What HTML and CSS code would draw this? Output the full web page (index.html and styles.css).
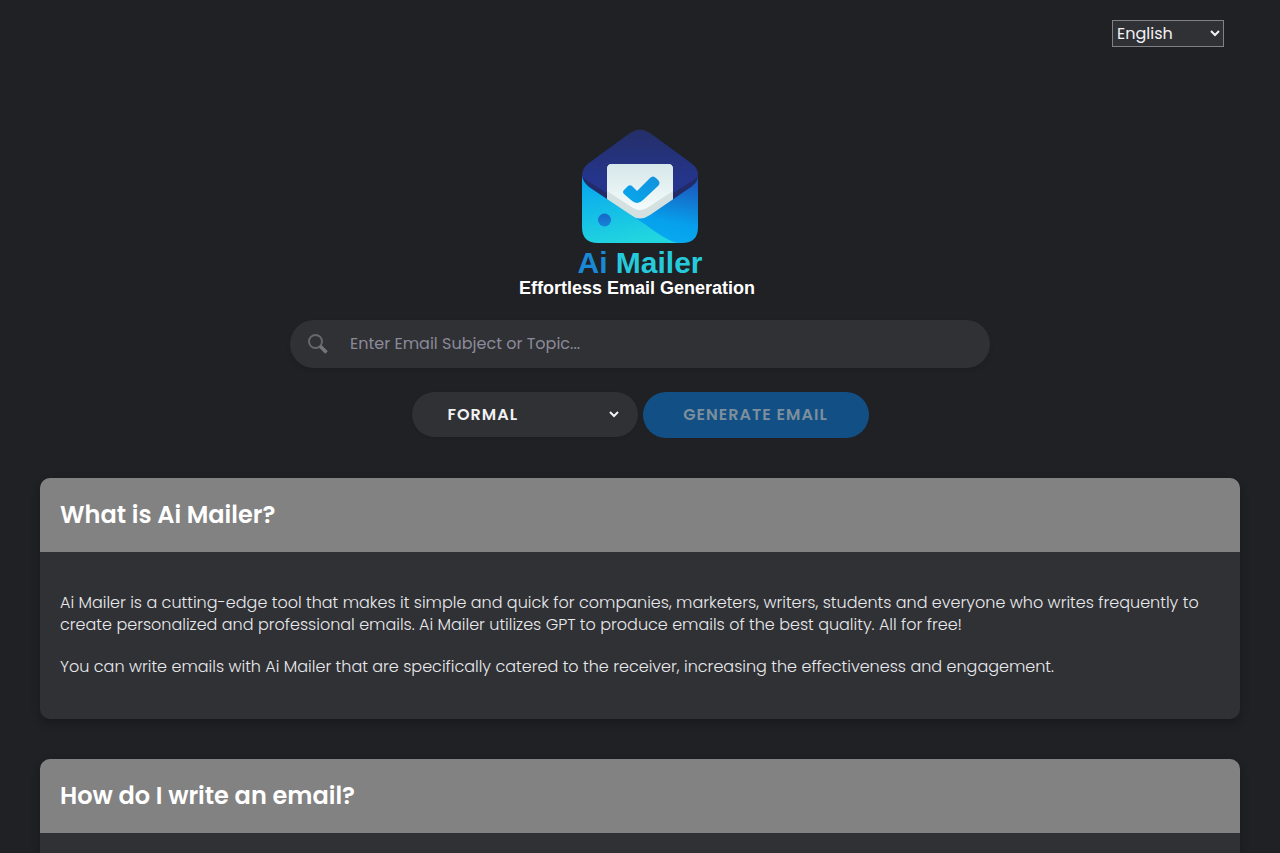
FILE: index.html
```html
<!DOCTYPE html>
<html lang="en">
<head>
<meta charset="utf-8">
<meta name="viewport" content="width=device-width, initial-scale=1">
<title>Ai Mailer</title>
<link rel="stylesheet" href="styles.css">
</head>
<body>
<header class="topbar">
  <select class="language" aria-label="Language">
    <option>English</option>
  </select>
</header>
<main>
  <section class="hero">
    <div class="logo">
      <svg class="logo-mark" viewBox="0 0 116 114" role="img" aria-label="Ai Mailer logo">
        <defs>
          <linearGradient id="lid" x1="0" y1="0" x2="0" y2="1"><stop offset="0" stop-color="#242f68"/><stop offset="0.6" stop-color="#25358c"/></linearGradient>
          <linearGradient id="right" x1="0.8" y1="0" x2="0.6" y2="1"><stop offset="0" stop-color="#1f50b8"/><stop offset="0.7" stop-color="#06a0ec"/><stop offset="1" stop-color="#08aaf0"/></linearGradient>
          <linearGradient id="left" x1="0.2" y1="0" x2="0.5" y2="1"><stop offset="0" stop-color="#07a6ee"/><stop offset="1" stop-color="#22d6df"/></linearGradient>
          <linearGradient id="tick" x1="1" y1="0" x2="0" y2="1"><stop offset="0" stop-color="#1590dc"/><stop offset="1" stop-color="#05a9ed"/></linearGradient>
          <linearGradient id="dot" x1="0" y1="0" x2="0" y2="1"><stop offset="0" stop-color="#1866c6"/><stop offset="1" stop-color="#1684d8"/></linearGradient>
          <linearGradient id="paper" x1="0" y1="0" x2="0" y2="1"><stop offset="0" stop-color="#d6e7ea"/><stop offset="1" stop-color="#f4fbfb"/></linearGradient>
        </defs>
        <path fill="#222b68" d="M0 47L58 5L116 47V70L58 96L0 70Z"/>
        <path fill="url(#lid)" d="M0 47Q0 39 7 34L48 4Q58-3 68 4L109 34Q116 39 116 46Q114 50 107 54L58 85L9 54Q2 50 0 47Z"/>
        <path fill="#d5e0e1" d="M25 40Q25 35 30 35H86Q91 35 91 40V74L65 92H51L25 74Z"/>
        <path fill="url(#paper)" d="M25 40Q25 35 30 35H86Q91 35 91 40V62L65 79Q58 83 51 79L25 62Z"/>
        <path fill="url(#right)" d="M116 47V98Q116 114 100 114H60L48 86Q58 93 68 86L109 58Q116 53 116 47Z"/>
        <path fill="url(#left)" d="M0 47Q1 53 7 58L64 96Q85 112 96 114H16Q0 114 0 98Z"/>
        <path fill="url(#tick)" d="M42 61L46 57Q49 55 51 58L55 62L68 49Q71 46 74 49L76 51Q79 54 76 57L61 71Q55 77 49 71L42 65Q40 63 42 61Z"/>
        <circle cx="22.500" cy="91" r="6.500" fill="url(#dot)"/>
      </svg>
      <h1 class="logo-name"><span class="logo-ai">Ai</span> Mailer</h1>
      <p class="logo-tagline">Effortless Email Generation</p>
    </div>
    <form class="generator">
      <label class="search">
        <svg class="search-icon" viewBox="0 0 20 20" aria-hidden="true">
          <circle cx="7.500" cy="7.500" r="6.500" fill="none" stroke="#67686b" stroke-width="2"/>
          <path d="M12 12L18.500 18.500" fill="none" stroke="#747578" stroke-width="3.500"/>
        </svg>
        <input class="search-input" type="text" placeholder="Enter Email Subject or Topic..." aria-label="Email subject or topic">
      </label>
      <div class="actions">
        <select class="tone" aria-label="Tone">
          <option>FORMAL</option>
        </select>
        <button class="generate" type="submit" disabled>GENERATE EMAIL</button>
      </div>
    </form>
  </section>
  <div class="cards">
    <article class="card">
      <h2 class="card-title">What is Ai Mailer?</h2>
      <div class="card-body">
        <p>Ai Mailer is a cutting-edge tool that makes it simple and quick for companies, marketers, writers, students and everyone who writes frequently to create personalized and professional emails. Ai Mailer utilizes GPT to produce emails of the best quality. All for free!</p>
        <p>You can write emails with Ai Mailer that are specifically catered to the receiver, increasing the effectiveness and engagement.</p>
      </div>
    </article>
    <article class="card">
      <h2 class="card-title">How do I write an email?</h2>
      <div class="card-body"></div>
    </article>
  </div>
</main>
</body>
</html>
```
FILE: styles.css
```css
* {
  box-sizing: border-box;
}

html {
  scrollbar-width: none;
}

body {
  margin: 0;
  background: #202124;
  color: #e8e9ec;
  font-family: Poppins, Inter, "Open Sans", sans-serif;
  font-size: 16px;
  line-height: 22px;
}

select,
input,
button {
  font: inherit;
}

.topbar {
  display: flex;
  justify-content: flex-end;
  padding: 20px 56px 0;
}

.language {
  width: 112px;
  height: 27px;
  border: 1px solid #808184;
  background-color: #303135;
  color: #f1f2f4;
}

.hero {
  display: flex;
  flex-direction: column;
  align-items: center;
  padding: 82px 40px 40px;
}

.logo {
  display: flex;
  flex-direction: column;
  align-items: center;
  font-family: "Arial Rounded MT Bold", "Liberation Sans", sans-serif;
}

.logo-mark {
  width: 116px;
  height: 114px;
}

.logo-name {
  margin: 4px 0 0;
  font-size: 30px;
  line-height: 32px;
  font-weight: 700;
  color: #25cbdc;
}

.logo-ai {
  color: #1988d6;
}

.logo-tagline {
  margin: 0;
  padding-right: 6px;
  font-size: 18px;
  line-height: 18px;
  font-weight: 700;
  color: #fff;
}

.generator {
  width: 100%;
  max-width: 700px;
  margin-top: 23px;
}

.search {
  display: flex;
  align-items: center;
  gap: 22px;
  height: 48px;
  padding: 0 18px;
  border-radius: 24px;
  background: #303135;
  box-shadow: 0 2px 4px rgba(0, 0, 0, 0.1);
}

.search-icon {
  flex: none;
  width: 20px;
  height: 20px;
}

.search-input {
  flex: 1;
  min-width: 0;
  padding: 0;
  border: 0;
  outline: 0;
  background: transparent;
  color: #e8e9ec;
}

.search-input::placeholder {
  color: #8b8a99;
  opacity: 1;
}

.actions {
  display: flex;
  flex-wrap: wrap;
  justify-content: center;
  gap: 5px;
  margin-top: 24px;
}

.tone,
.generate {
  width: 226px;
  height: 46px;
  border: 0;
  border-radius: 23px;
  font-weight: 600;
  letter-spacing: 1px;
}

.tone {
  height: 45px;
  padding: 0 0 0 32px;
  border-right: 16px solid #303135;
  background-color: #303135;
  color: #f1f2f4;
  box-shadow: 0 1px 3px rgba(0, 0, 0, 0.1);
}

.generate {
  background: #124f84;
  color: #7d8f9d;
}

.cards {
  display: grid;
  gap: 40px;
  padding: 0 40px;
}

.card {
  overflow: hidden;
  border-radius: 10px;
  background: #303135;
  box-shadow: 0 4px 10px rgba(0, 0, 0, 0.25);
}

.card-title {
  margin: 0;
  padding: 20px;
  background: #828282;
  color: #fff;
  font-size: 24px;
  line-height: 34px;
  font-weight: 600;
}

.card-body {
  display: grid;
  gap: 20px;
  padding: 40px 20px 41px;
}

.card-body p {
  margin: 0;
  font-weight: 300;
}
```
